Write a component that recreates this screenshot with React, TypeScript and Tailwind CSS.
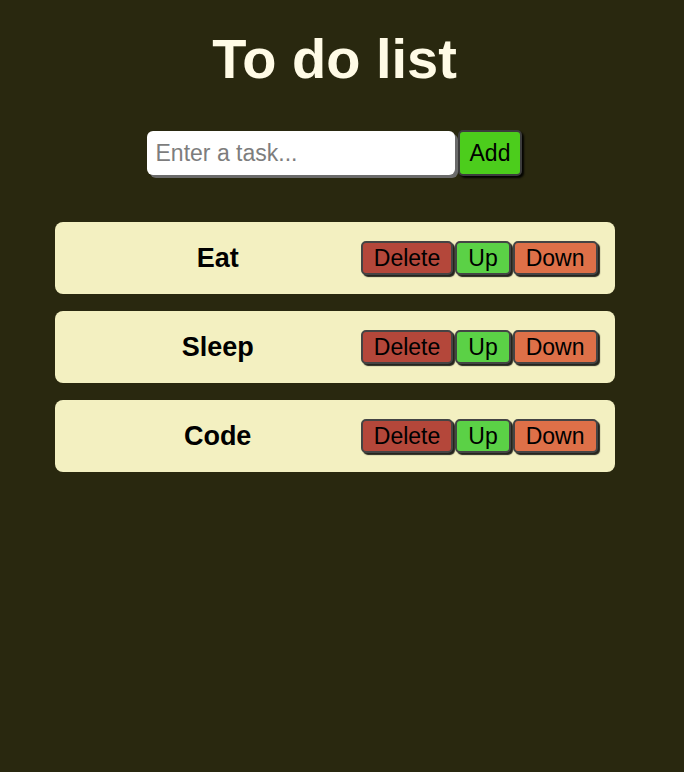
import React, { useState } from "react";

const font = { fontFamily: '"Liberation Sans", Arial, sans-serif' };

function App() {
  const [tasks] = useState(["Eat", "Sleep", "Code"]);

  return (
    <div className="min-h-[772px] w-full bg-[#29280f]" style={font}>
      <div className="w-[669px] flex flex-col items-center pt-[27px]">
        <h1 className="text-[56px] leading-[1.15] font-bold text-[#fffbe6]">To do list</h1>

        <div className="mt-[40px] flex items-start gap-[3px]">
          <input
            type="text"
            placeholder="Enter a task..."
            className="w-[308px] h-[44px] rounded-[6px] bg-white px-[9px] text-[23px] text-black placeholder:text-[#7d7d7d] shadow-[3px_3px_0_#6b6b6b] outline-none"
          />
          <button className="h-[46px] -mt-[1px] px-[10px] rounded-[5px] bg-[#4ccd1c] border-2 border-[#3c3c3c] text-[23px] leading-[1.15] text-black shadow-[2px_2px_2px_rgba(0,0,0,0.9)]">
            Add
          </button>
        </div>

        <ol className="mt-[46px] flex flex-col gap-[17px] w-[560px]">
          {tasks.map((t) => (
            <li
              key={t}
              className="h-[72px] rounded-[8px] bg-[#f3f0c1] flex items-center pl-[20px] pr-[17px]"
            >
              <span className="flex-1 text-center text-[27px] leading-[1.15] font-bold text-black">{t}</span>
              <div className="flex gap-[2px]">
                <button className="h-[34px] px-[11px] rounded-[5px] border-2 border-[#444] bg-[#b4473a] text-[23px] leading-[1.15] text-black shadow-[2px_2px_1px_rgba(0,0,0,0.85)]">
                  Delete
                </button>
                <button className="h-[34px] px-[11px] rounded-[5px] border-2 border-[#444] bg-[#5bd146] text-[23px] leading-[1.15] text-black shadow-[2px_2px_1px_rgba(0,0,0,0.85)]">
                  Up
                </button>
                <button className="h-[34px] px-[11px] rounded-[5px] border-2 border-[#444] bg-[#de7048] text-[23px] leading-[1.15] text-black shadow-[2px_2px_1px_rgba(0,0,0,0.85)]">
                  Down
                </button>
              </div>
            </li>
          ))}
        </ol>
      </div>
    </div>
  );
}

export default App;
